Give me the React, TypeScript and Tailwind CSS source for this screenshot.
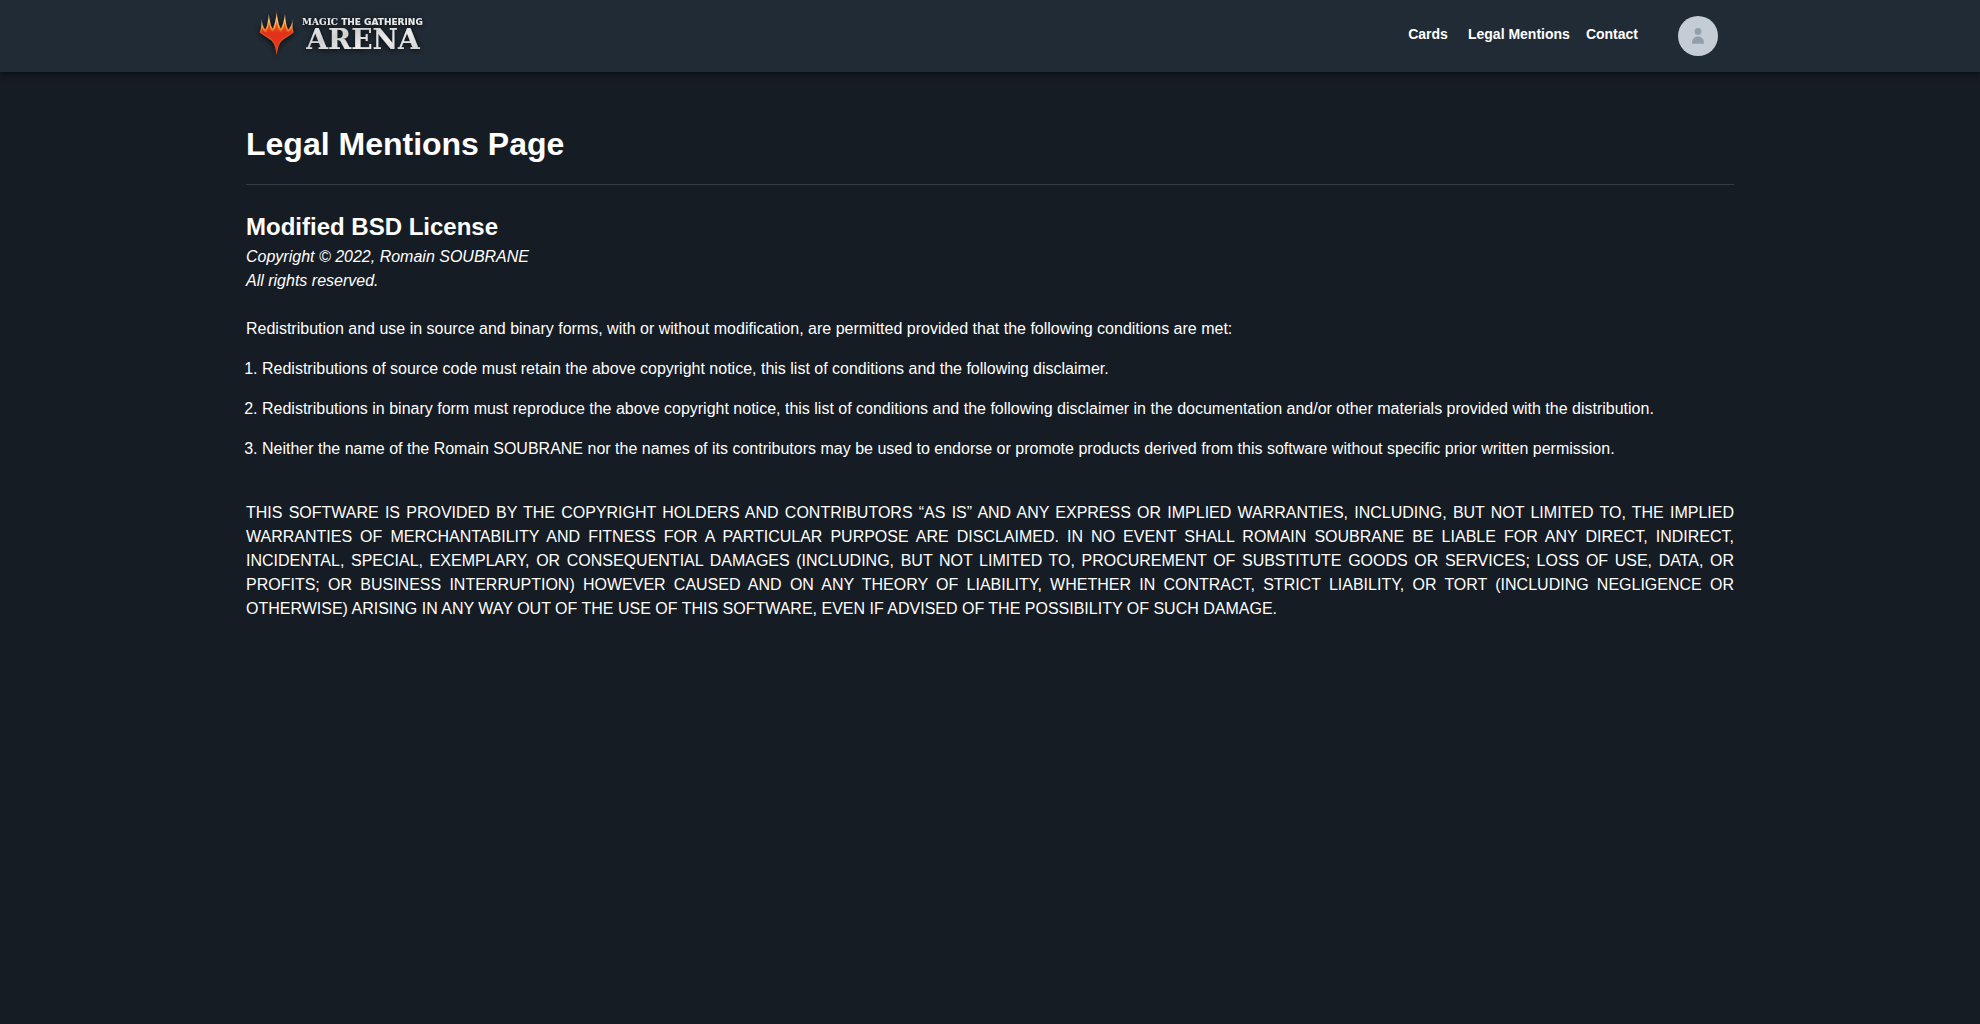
const navLinks = ['Cards', 'Legal Mentions', 'Contact'];

const conditions = [
  'Redistributions of source code must retain the above copyright notice, this list of conditions and the following disclaimer.',
  'Redistributions in binary form must reproduce the above copyright notice, this list of conditions and the following disclaimer in the documentation and/or other materials provided with the distribution.',
  'Neither the name of the Romain SOUBRANE nor the names of its contributors may be used to endorse or promote products derived from this software without specific prior written permission.',
];

function Logo() {
  return (
    <svg width="200" height="72" viewBox="0 0 200 72" role="img" aria-label="Magic the Gathering Arena">
      <defs>
        <linearGradient id="flame" x1="0" y1="11" x2="0" y2="55" gradientUnits="userSpaceOnUse">
          <stop offset="0" stopColor="#d9702c" />
          <stop offset="0.2" stopColor="#ffd98a" />
          <stop offset="0.36" stopColor="#f7a13a" />
          <stop offset="0.5" stopColor="#e9501f" />
          <stop offset="1" stopColor="#ee5a1e" />
        </linearGradient>
        <linearGradient id="core" x1="0" y1="18" x2="0" y2="52" gradientUnits="userSpaceOnUse">
          <stop offset="0" stopColor="#f07a24" />
          <stop offset="0.45" stopColor="#e0301b" />
          <stop offset="1" stopColor="#e8391b" />
        </linearGradient>
        <linearGradient id="steel" x1="0" y1="0" x2="1" y2="1">
          <stop offset="0" stopColor="#f1f1f1" />
          <stop offset="0.35" stopColor="#cfcfd0" />
          <stop offset="0.6" stopColor="#ededed" />
          <stop offset="1" stopColor="#c8c8ca" />
        </linearGradient>
        <filter id="shade" x="-10%" y="-20%" width="120%" height="140%">
          <feDropShadow dx="0" dy="1" stdDeviation="3" floodColor="#05080c" floodOpacity="0.9" />
        </filter>
      </defs>
      <g filter="url(#shade)">
        <path
          d="M15.5 19C16 23.5 17.2 27.6 19.2 29.6C21.4 27 22.4 20 22.8 13.5C23.4 19.5 24.4 26 26.6 28.8C29 25.4 30.2 18 30.7 11C31.2 18 32.4 25.4 34.8 28.8C37 26 38.4 19.5 39 13.5C39.3 20 40.2 27 42.4 29.6C44.4 27.6 46.3 23.5 47.2 19C46.2 24 46 28 47.6 32.4C43.4 35.6 39 37.6 35.6 40.8C32.8 43.8 31.5 48.5 30.7 55C29.9 48.5 28.6 43.8 25.8 40.8C22.4 37.6 18 35.6 13.8 32.4C15.4 28 15.8 24 15.5 19Z"
          fill="url(#flame)"
        />
        <path
          d="M16 27C16.8 29.6 17.8 31.4 19.4 32.4C21.4 30.6 22.4 26.5 22.9 21C23.6 26.5 24.8 30.4 26.8 31.8C29 29.5 30.2 25 30.7 19C31.2 25 32.4 29.5 34.6 31.8C36.6 30.4 38.2 26.5 38.9 21C39.2 26.5 40.2 30.6 42.2 32.4C43.8 31.4 45 29.6 45.9 27C45.5 29.2 45.7 30.8 46.4 32.3C42.4 35 38.4 36.8 35 40C32.4 42.8 31.4 46.8 30.7 51.5C30 46.8 29 42.8 26.4 40C23 36.8 19 35 15 32.3C15.8 30.8 16.2 29.2 16 27Z"
          fill="url(#core)"
        />
        <text x="56" y="25" fill="#e9e9ea" fontSize="9" fontWeight="700" fontFamily="'DejaVu Serif', serif">
          MAGIC
          <tspan fontFamily="'DejaVu Sans', sans-serif"> THE GATHERING</tspan>
        </text>
        <text x="117" y="49" textAnchor="middle" fill="url(#steel)" fontSize="28" fontWeight="700" fontFamily="'DejaVu Serif', serif">
          ARENA
        </text>
      </g>
    </svg>
  );
}

function Header() {
  return (
    <header className="bg-[#212b36] shadow-[0_2px_4px_rgba(0,0,0,0.35),0_1px_10px_rgba(0,0,0,0.2)]">
      <div className="mx-auto flex h-[72px] max-w-[1520px] items-start justify-between px-4">
        <a href="#">
          <Logo />
        </a>
        <div className="flex items-start gap-8 py-4 pr-4">
          <nav className="flex">
            {navLinks.map((label) => (
              <a
                key={label}
                href="#"
                className="flex h-9 min-w-16 items-center justify-center px-2 text-sm font-bold whitespace-nowrap"
              >
                {label}
              </a>
            ))}
          </nav>
          <button
            type="button"
            aria-label="Account"
            className="flex size-10 items-center justify-center rounded-full bg-[#c4cdd5]"
          >
            <svg width="16" height="16" viewBox="0 0 16 16" fill="#919eab" aria-hidden="true">
              <circle cx="8" cy="3.4" r="3.4" />
              <path d="M2 15C2 11.2 4.4 8.6 8 8.6S14 11.2 14 15C14 15.5 13.7 15.8 13.2 15.8H2.8C2.3 15.8 2 15.5 2 15Z" />
            </svg>
          </button>
        </div>
      </div>
    </header>
  );
}

export default function App() {
  return (
    <div className="min-h-screen bg-[#161c24] font-['Liberation_Sans',Arial,sans-serif] text-base text-white">
      <Header />
      <main className="mx-auto max-w-[1520px] px-4 py-12">
        <h1 className="mb-4 text-[32px] leading-[48px] font-bold">Legal Mentions Page</h1>
        <hr className="mb-6 border-[#333c45]" />
        <h2 className="text-2xl leading-9 font-bold">Modified BSD License</h2>
        <p className="mb-6 italic">
          Copyright © 2022, Romain SOUBRANE
          <br />
          All rights reserved.
        </p>
        <p className="mb-4">
          Redistribution and use in source and binary forms, with or without modification, are permitted provided that
          the following conditions are met:
        </p>
        <ol className="mb-10 list-decimal space-y-4 pl-4">
          {conditions.map((text) => (
            <li key={text}>{text}</li>
          ))}
        </ol>
        <p className="text-justify">
          THIS SOFTWARE IS PROVIDED BY THE COPYRIGHT HOLDERS AND CONTRIBUTORS “AS IS” AND ANY EXPRESS OR IMPLIED
          WARRANTIES, INCLUDING, BUT NOT LIMITED TO, THE IMPLIED WARRANTIES OF MERCHANTABILITY AND FITNESS FOR A
          PARTICULAR PURPOSE ARE DISCLAIMED. IN NO EVENT SHALL ROMAIN SOUBRANE BE LIABLE FOR ANY DIRECT, INDIRECT,
          INCIDENTAL, SPECIAL, EXEMPLARY, OR CONSEQUENTIAL DAMAGES (INCLUDING, BUT NOT LIMITED TO, PROCUREMENT OF
          SUBSTITUTE GOODS OR SERVICES; LOSS OF USE, DATA, OR PROFITS; OR BUSINESS INTERRUPTION) HOWEVER CAUSED AND ON
          ANY THEORY OF LIABILITY, WHETHER IN CONTRACT, STRICT LIABILITY, OR TORT (INCLUDING NEGLIGENCE OR OTHERWISE)
          ARISING IN ANY WAY OUT OF THE USE OF THIS SOFTWARE, EVEN IF ADVISED OF THE POSSIBILITY OF SUCH DAMAGE.
        </p>
      </main>
    </div>
  );
}
